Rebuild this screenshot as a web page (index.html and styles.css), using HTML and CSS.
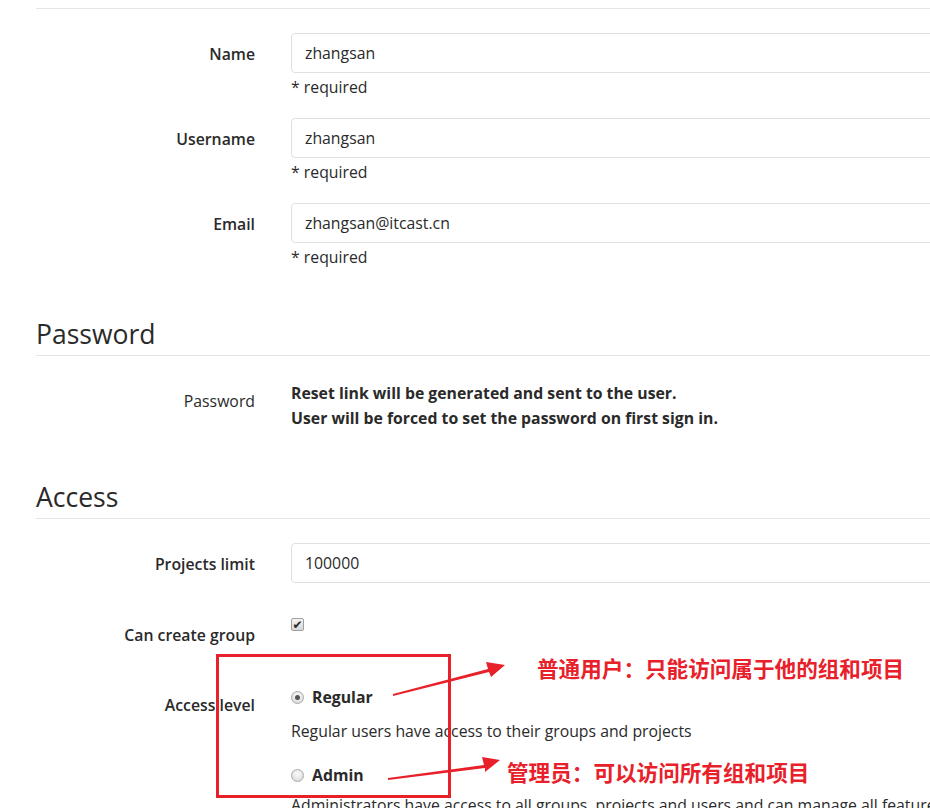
FILE: index.html
```html
<!DOCTYPE html>
<html lang="en">
<head>
<meta charset="utf-8">
<title>New user</title>
<link rel="stylesheet" href="styles.css">
</head>
<body>
<div class="page">
  <div class="rule-top"></div>

  <div class="row row-first">
    <div class="label label-input">Name</div>
    <div class="field">
      <div class="input">zhangsan</div>
      <div class="hint">* required</div>
    </div>
  </div>
  <div class="row">
    <div class="label label-input">Username</div>
    <div class="field">
      <div class="input">zhangsan</div>
      <div class="hint">* required</div>
    </div>
  </div>
  <div class="row">
    <div class="label label-input">Email</div>
    <div class="field">
      <div class="input">zhangsan@itcast.cn</div>
      <div class="hint">* required</div>
    </div>
  </div>

  <h2 class="section-title title-password">Password</h2>

  <div class="row row-password">
    <div class="label label-plain">Password</div>
    <div class="field">
      <div class="strong-lines">
        <div>Reset link will be generated and sent to the user.</div>
        <div>User will be forced to set the password on first sign in.</div>
      </div>
    </div>
  </div>

  <h2 class="section-title title-access">Access</h2>

  <div class="row row-limit">
    <div class="label label-input">Projects limit</div>
    <div class="field">
      <div class="input">100000</div>
    </div>
  </div>

  <div class="row row-group">
    <div class="label label-check">Can create group</div>
    <div class="field">
      <span class="checkbox">&#10004;</span>
    </div>
  </div>

  <div class="row row-level">
    <div class="label label-level">Access level</div>
    <div class="field">
      <div class="radio-line"><span class="radio checked"></span><span class="radio-text">Regular</span></div>
      <div class="help help-regular">Regular users have access to their groups and projects</div>
      <div class="radio-line radio-admin"><span class="radio"></span><span class="radio-text">Admin</span></div>
      <div class="help help-admin">Administrators have access to all groups, projects and users and can manage all features in this installation</div>
    </div>
  </div>
</div>

<div class="annot-box"></div>
<svg class="annot-arrows" width="930" height="808" viewBox="0 0 930 808" aria-hidden="true">
  <polygon points="393,694 488,669 486,662 505,665 491,677 489,672 393,696" fill="#e8202a"/>
  <polygon points="388,778 484,765 482,757 500,760 485,772 485,768 388,780" fill="#e8202a"/>
</svg>
<div class="annot-text annot-regular">普通用户：只能访问属于他的组和项目</div>
<div class="annot-text annot-admin">管理员：可以访问所有组和项目</div>
</body>
</html>
```

FILE: styles.css
```css
html, body {
  margin: 0;
  padding: 0;
  overflow: hidden;
  background: #ffffff;
}

body {
  font-family: "Open Sans", "Noto Sans", sans-serif;
  font-size: 15.8px;
  color: #2a2a2a;
  width: 930px;
  height: 808px;
  position: relative;
}

.page {
  padding-top: 8px;
  padding-left: 36px;
  width: 930px;
}

.rule-top {
  border-top: 1px solid #e5e5e5;
}

.row {
  display: flex;
  margin-top: 21px;
}

.row-first {
  margin-top: 24px;
}

.label {
  width: 219px;
  flex: none;
  text-align: right;
  font-weight: 600;
  line-height: 20px;
}

.label-input {
  padding-top: 11px;
}

.label-plain {
  font-weight: 400;
  padding-top: 10px;
}

.label-check {
  padding-top: 17px;
}

.label-level {
  padding-top: 8px;
}

.field {
  margin-left: 36px;
  flex: 1;
  min-width: 0;
}

.input {
  box-sizing: border-box;
  height: 40px;
  width: calc(100% + 20px);
  border: 1px solid #e0e0e0;
  border-radius: 4px;
  padding: 0 13px;
  line-height: 38px;
  color: #2a2a2a;
}

.hint {
  margin-top: 4px;
  line-height: 20px;
}

.section-title {
  margin: 0;
  font-size: 26.5px;
  font-weight: 400;
  line-height: 36px;
  padding-bottom: 3px;
  border-bottom: 1px solid #e5e5e5;
  color: #2a2a2a;
}

.title-password {
  margin-top: 49px;
}

.title-access {
  margin-top: 48px;
}

.row-password {
  margin-top: 25px;
}

.strong-lines {
  font-weight: 700;
  line-height: 25px;
  white-space: nowrap;
}

.row-limit {
  margin-top: 24px;
}

.row-group {
  margin-top: 25px;
}

.checkbox {
  display: inline-flex;
  align-items: center;
  justify-content: center;
  box-sizing: border-box;
  width: 13px;
  height: 13px;
  margin-top: 10px;
  border: 1px solid #a0a0a0;
  border-radius: 2px;
  background: linear-gradient(#f4f4f4, #d6d6d6);
  color: #2a2a2a;
  font-size: 12px;
  font-weight: 700;
  line-height: 1;
  font-family: "DejaVu Sans", sans-serif;
}

.row-level {
  margin-top: 42px;
}

.radio-line {
  display: flex;
  align-items: center;
  line-height: 20px;
}

.radio {
  box-sizing: border-box;
  width: 13px;
  height: 13px;
  border-radius: 50%;
  border: 1px solid #a8a8a8;
  background: radial-gradient(circle at 50% 35%, #fbfbfb, #d4d4d4);
  margin-right: 8px;
  display: inline-flex;
  align-items: center;
  justify-content: center;
}

.radio.checked::after {
  content: "";
  width: 5px;
  height: 5px;
  border-radius: 50%;
  background: #555555;
}

.radio-text {
  font-weight: 700;
}

.help {
  line-height: 20px;
  white-space: nowrap;
}

.help-regular {
  margin-top: 14px;
}

.radio-admin {
  margin-top: 24px;
}

.help-admin {
  margin-top: 10px;
}

.annot-box {
  position: absolute;
  left: 216px;
  top: 654px;
  width: 229px;
  height: 138px;
  border: 3px solid #e8202a;
}

.annot-arrows {
  position: absolute;
  left: 0;
  top: 0;
  pointer-events: none;
}

.annot-text {
  position: absolute;
  font-family: "Noto Sans CJK SC", sans-serif;
  font-weight: 700;
  font-size: 21.6px;
  line-height: 28px;
  color: #e8202a;
  white-space: nowrap;
}

.annot-regular {
  left: 537px;
  top: 654px;
}

.annot-admin {
  left: 507px;
  top: 758px;
}
```
